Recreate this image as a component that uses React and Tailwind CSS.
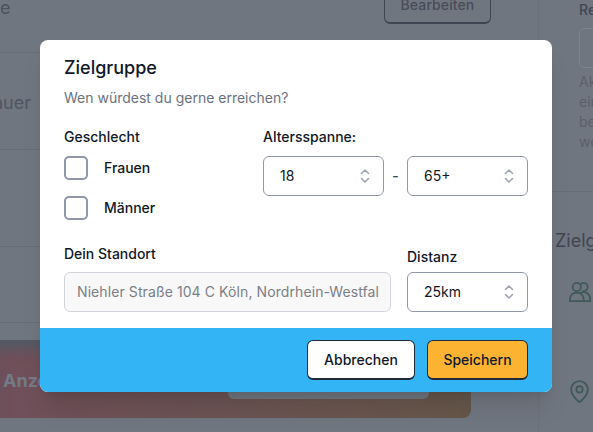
import React from 'react';
import { MapPin } from 'lucide-react';

function UsersIcon() {
    return (
        <svg width="22" height="24" viewBox="0 0 24 24" fill="none" stroke="#405a5c" strokeWidth="2" strokeLinecap="round" strokeLinejoin="round">
            <circle cx="8.5" cy="6.5" r="4.5" />
            <path d="M13 3.2a4.5 4.5 0 1 1 2 7.8" />
            <path d="M1 22v-2a7.5 7.5 0 0 1 15 0v2z" />
            <path d="M12.5 13.2a7 7 0 0 1 10.5 6.3V22h-7" />
        </svg>
    );
}

function UpDown() {
    return (
        <svg width="10" height="16" viewBox="0 0 10 16" fill="none" stroke="#9ca3af" strokeWidth="1.5" strokeLinecap="round" strokeLinejoin="round">
            <path d="M1.5 5.5 5 2l3.5 3.5" />
            <path d="M1.5 10.5 5 14l3.5-3.5" />
        </svg>
    );
}

function FakeSelect({ value, className = '' }) {
    return (
        <div className={`flex h-10 items-center justify-between rounded-md border border-[#8f97a8] bg-white pl-4 pr-[13px] text-sm text-[#111827] ${className}`}>
            <span>{value}</span>
            <UpDown />
        </div>
    );
}

function CheckRow({ label }) {
    return (
        <div className="flex h-6 items-center gap-4">
            <div className="h-6 w-6 rounded-[5px] border-2 border-[#8f97a8] bg-white"></div>
            <span className="text-sm font-medium text-[#111827]">{label}</span>
        </div>
    );
}

export default function App() {
    return (
        <div className="relative flex h-[432px] w-[593px] overflow-hidden bg-[#70767f] font-['Inter',sans-serif]">
            {/* page behind the dialog */}
            <div className="w-[539px] shrink-0 border-r border-[#6b717b]">
                <div className="flex h-[53px] items-start justify-between border-b border-[#686e78] pr-[47px]">
                    <span className="mt-[-6px] text-lg text-[#4c525e]">e</span>
                    <div className="mt-[-10px] flex h-[34px] w-[107px] items-center justify-center rounded-md border border-b-2 border-[#3f4552] pb-[3px] text-sm font-medium tracking-[0.1px] text-[#474d5a]">
                        Bearbeiten
                    </div>
                </div>
                <div className="flex h-[97px] items-center justify-end border-b border-[#686e78] pr-[507px] pt-[3px] text-lg text-[#4f5561]">
                    <span className="whitespace-nowrap">auer</span>
                </div>
                <div className="h-[97px] border-b border-[#686e78]"></div>
                <div className="h-[76px] border-b border-[#686e78]"></div>
                <div className="relative mt-[17px] flex h-[78px] w-[471px] rounded-br-lg bg-gradient-to-r from-[#704f5a] to-[#66574a] pl-[3px] pt-[27px] shadow-[inset_0_14px_14px_-6px_#4f5b66]">
                    <span className="text-lg font-bold text-[#747a86]">Anzeige</span>
                    <div className="absolute left-[228px] top-[20px] h-[39px] w-[201px] rounded-md bg-[#70767f]"></div>
                </div>
            </div>
            <div className="min-w-0 flex-1 overflow-hidden">
                <div className="h-[192px] border-b border-[#686e78] pl-[40px]">
                    <div className="whitespace-nowrap pt-[2px] text-sm font-medium leading-4 text-[#3f4552]">Reichweite</div>
                    <div className="mt-[10px] h-10 w-[60px] rounded-md border border-[#7d838d]"></div>
                    <div className="mt-[4px] whitespace-nowrap text-sm leading-5 text-[#5a606b]">
                        <div>Aktuell</div>
                        <div>eine</div>
                        <div>bei</div>
                        <div>wenn</div>
                    </div>
                </div>
                <div className="pl-[16px] pt-[37px]">
                    <div className="whitespace-nowrap text-lg leading-6 text-[#3f4552]">Zielgruppe</div>
                    <div className="mt-[27px] pl-[14px]"><UsersIcon /></div>
                    <div className="mt-[75px] pl-[12px]"><MapPin size={25} strokeWidth={1.8} className="text-[#405a5c]" /></div>
                </div>
            </div>

            {/* dialog */}
            <div className="absolute inset-0 flex items-start pl-10 pt-10">
                <div className="w-[512px] overflow-hidden rounded-lg bg-white shadow-xl">
                    <div className="h-[288px] px-6 pt-[17px]">
                        <h3 className="text-lg leading-[22px] font-medium text-[#111827]">Zielgruppe</h3>
                        <p className="mt-[9px] text-sm leading-5 text-[#6b7280]">Wen würdest du gerne erreichen?</p>
                        <div className="mt-[19px] flex">
                            <div className="w-[199px]">
                                <div className="text-sm leading-5 font-medium text-[#111827]">Geschlecht</div>
                                <div className="mt-[9px] flex flex-col gap-4">
                                    <CheckRow label="Frauen" />
                                    <CheckRow label="Männer" />
                                </div>
                            </div>
                            <div className="flex-1">
                                <div className="text-sm leading-5 font-medium text-[#111827]">Altersspanne:</div>
                                <div className="mt-[9px] flex items-center">
                                    <FakeSelect value="18" className="w-[121px]" />
                                    <span className="w-[23px] text-center text-sm font-medium text-[#374151]">-</span>
                                    <FakeSelect value="65+" className="w-[121px]" />
                                </div>
                            </div>
                        </div>
                        <div className="mt-[24px] flex items-end gap-4">
                            <div className="w-[327px]">
                                <div className="text-sm leading-5 font-medium text-[#111827]">Dein Standort</div>
                                <div className="mt-2 flex h-10 items-center overflow-hidden whitespace-nowrap rounded-md border border-[#d1d5db] bg-[#f8f8f8] px-3 text-sm tracking-[0.09px] text-[#7c7f86]">
                                    Niehler Straße 104 C Köln, Nordrhein-Westfal
                                </div>
                            </div>
                            <div className="w-[121px]">
                                <div className="text-sm leading-5 font-medium text-[#111827]">Distanz</div>
                                <FakeSelect value="25km" className="mt-[5px]" />
                            </div>
                        </div>
                    </div>
                    <div className="flex h-16 items-center justify-end gap-3 bg-[#33b5f5] pr-6">
                        <button className="h-10 w-[108px] rounded-md border border-b-2 border-[#1f2937] bg-white text-sm font-medium text-[#111827]">Abbrechen</button>
                        <button className="h-10 w-[101px] rounded-md border border-b-2 border-[#1f2937] bg-[#fbb331] text-sm font-medium text-[#111827]">Speichern</button>
                    </div>
                </div>
            </div>
        </div>
    );
}
